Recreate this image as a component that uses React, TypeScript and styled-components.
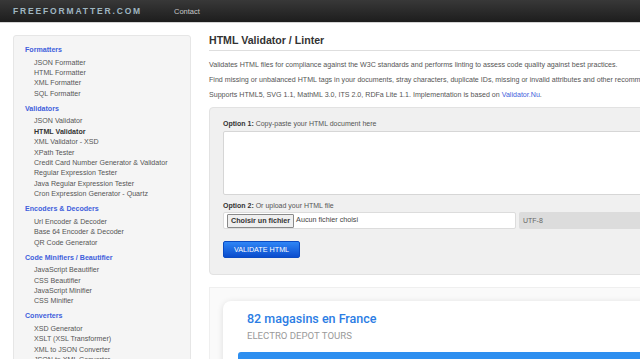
import React from 'react';
import styled, {createGlobalStyle} from "styled-components";

const GlobalStyle = createGlobalStyle`
  html, body {
    margin: 0;
    padding: 0;
    overflow: hidden;
    background: #fff;
    font-family: "Liberation Sans", Arial, sans-serif;
  }
`

const sections = [
    {title: "Formatters", items: ["JSON Formatter", "HTML Formatter", "XML Formatter", "SQL Formatter"]},
    {
        title: "Validators", items: ["JSON Validator", "HTML Validator", "XML Validator - XSD", "XPath Tester",
            "Credit Card Number Generator & Validator", "Regular Expression Tester", "Java Regular Expression Tester",
            "Cron Expression Generator - Quartz"]
    },
    {title: "Encoders & Decoders", items: ["Url Encoder & Decoder", "Base 64 Encoder & Decoder", "QR Code Generator"]},
    {title: "Code Minifiers / Beautifier", items: ["JavaScript Beautifier", "CSS Beautifier", "JavaScript Minifier", "CSS Minifier"]},
    {title: "Converters", items: ["XSD Generator", "XSLT (XSL Transformer)", "XML to JSON Converter", "JSON to XML Converter", "CSV to XML Converter"]},
];

const App = () => {
    return (
        <Page>
            <GlobalStyle/>
            <TopBar>
                <Logo>FREEFORMATTER.COM</Logo>
                <TopLink>Contact</TopLink>
            </TopBar>
            <Layout>
                <Sidebar>
                    {sections.map(s => (
                        <Section key={s.title}>
                            <SectionTitle>{s.title}</SectionTitle>
                            {s.items.map(item => (
                                <NavItem key={item} active={item === "HTML Validator"}>{item}</NavItem>
                            ))}
                        </Section>
                    ))}
                </Sidebar>
                <Main>
                    <Title>HTML Validator / Linter</Title>
                    <Intro>
                        <p>Validates HTML files for compliance against the W3C standards and performs linting to assess code quality against best practices.</p>
                        <p>Find missing or unbalanced HTML tags in your documents, stray characters, duplicate IDs, missing or invalid attributes and other recommendations.</p>
                        <p>Supports HTML5, SVG 1.1, MathML 3.0, ITS 2.0, RDFa Lite 1.1. Implementation is based on <A>Validator.Nu</A>.</p>
                    </Intro>
                    <FormPanel>
                        <Label><b>Option 1:</b> Copy-paste your HTML document here</Label>
                        <TextArea/>
                        <Label top={6}><b>Option 2:</b> Or upload your HTML file</Label>
                        <FileRow>
                            <FileBox>
                                <FileButton>Choisir un fichier</FileButton>
                                <FileName>Aucun fichier choisi</FileName>
                            </FileBox>
                            <Encoding>UTF-8</Encoding>
                        </FileRow>
                        <SubmitButton>VALIDATE HTML</SubmitButton>
                    </FormPanel>
                    <AdBox>
                        <AdCard>
                            <AdTitle>82 magasins en France</AdTitle>
                            <AdSub>ELECTRO DEPOT TOURS</AdSub>
                            <AdBar/>
                        </AdCard>
                    </AdBox>
                </Main>
            </Layout>
        </Page>
    );
};

const Page = styled.div`
    width: 640px;
    height: 359px;
    overflow: hidden;
`
const TopBar = styled.div`
    height: 22px;
    display: flex;
    align-items: center;
    padding-left: 13px;
    background: linear-gradient(#383838, #1d1d1d);
    border-bottom: 1px solid #d4d4d4;
`
const Logo = styled.div`
    font-size: 8.5px;
    font-weight: bold;
    letter-spacing: 1.85px;
    color: #9fb6c1;
    width: 161px;
`
const TopLink = styled.div`
    font-size: 7.5px;
    color: #c8c8c8;
`
const Layout = styled.div`
    display: flex;
    gap: 18px;
    padding: 10px 0 0 13px;
`
const Sidebar = styled.div`
    flex: 0 0 178px;
    margin-top: 2px;
    padding: 9px 0 0 11px;
    box-sizing: border-box;
    background: #f5f5f5;
    border: 1px solid #e6e6e6;
    border-radius: 3px;
    height: 400px;
`
const Section = styled.div`
    margin-bottom: 4.6px;
`
const SectionTitle = styled.div`
    font-size: 7.1px;
    font-weight: bold;
    line-height: 10.4px;
    color: #3f5fdc;
    margin-bottom: 2.2px;
`
const NavItem = styled.div<{active?: boolean}>`
    font-size: 7.1px;
    line-height: 10.4px;
    padding-left: 9px;
    white-space: nowrap;
    color: ${p => p.active ? "#333" : "#555"};
    font-weight: ${p => p.active ? "bold" : "normal"};
`
const Main = styled.div`
    flex: 0 0 560px;
`
const Title = styled.h1`
    margin: 0;
    font-size: 10.6px;
    line-height: 14px;
    color: #333;
    padding-bottom: 3px;
    border-bottom: 1px solid #dedede;
`
const Intro = styled.div`
    margin-top: 7px;
    font-size: 7.1px;
    line-height: 15px;
    color: #555;
    white-space: nowrap;

    p {
        margin: 0;
    }
`
const A = styled.span`
    color: #3f5fdc;
`
const FormPanel = styled.div`
    margin-top: 4px;
    padding: 11px 13px 16px;
    background: #f0f0f0;
    border: 1px solid #e2e2e2;
    border-radius: 4px;
`
const Label = styled.div<{top?: number}>`
    margin-top: ${p => p.top || 0}px;
    font-size: 7px;
    line-height: 10px;
    color: #555;

    b {
        color: #333;
    }
`
const TextArea = styled.div`
    margin-top: 2px;
    height: 62px;
    background: #fff;
    border: 1px solid #d6d6d6;
    border-radius: 2px;
`
const FileRow = styled.div`
    margin-top: 1px;
    display: flex;
    gap: 3px;
    height: 17px;
`
const FileBox = styled.div`
    flex: 0 0 293px;
    display: flex;
    align-items: center;
    gap: 2px;
    padding-left: 3px;
    box-sizing: border-box;
    background: #fff;
    border: 1px solid #dcdcdc;
    border-radius: 2px;
`
const FileButton = styled.div`
    height: 12px;
    line-height: 12px;
    padding: 0 3px;
    font-size: 7.2px;
    font-weight: bold;
    color: #333;
    background: #efefef;
    border: 1px solid #8a8a8a;
    border-radius: 1px;
`
const FileName = styled.div`
    font-size: 7.2px;
    color: #444;
    margin-top: -3px;
`
const Encoding = styled.div`
    flex: 1;
    display: flex;
    align-items: center;
    padding-left: 4px;
    font-size: 7px;
    color: #666;
    background: #dcdcdc;
    border-radius: 2px;
`
const SubmitButton = styled.div`
    margin-top: 12px;
    width: 77px;
    height: 17px;
    display: flex;
    align-items: center;
    justify-content: center;
    font-size: 7.2px;
    color: #fff;
    background: linear-gradient(#2f86f6, #0a4ccd);
    border: 1px solid #0b4bc2;
    border-radius: 2px;
    box-sizing: border-box;
`
const AdBox = styled.div`
    margin-top: 12px;
    padding: 13px 0 0 13px;
    height: 100px;
    background: #fafafa;
    border: 1px solid #efefef;
`
const AdCard = styled.div`
    padding: 10px 0 0 15px;
    height: 100px;
    background: #fff;
    border-radius: 8px;
    box-shadow: 0 1px 6px rgba(0, 0, 0, 0.12);
    font-family: Roboto, "Liberation Sans", sans-serif;
`
const AdTitle = styled.div`
    padding-left: 9px;
    font-size: 12.5px;
    font-weight: 500;
    line-height: 16px;
    color: #2b7de4;
`
const AdSub = styled.div`
    padding-left: 9px;
    margin-top: 1.5px;
    font-size: 9.6px;
    line-height: 13px;
    color: #9a9a9a;
`
const AdBar = styled.div`
    margin-top: 10.5px;
    height: 40px;
    background: #2e8ff0;
    border-radius: 3px 0 0 0;
`

export default App;
